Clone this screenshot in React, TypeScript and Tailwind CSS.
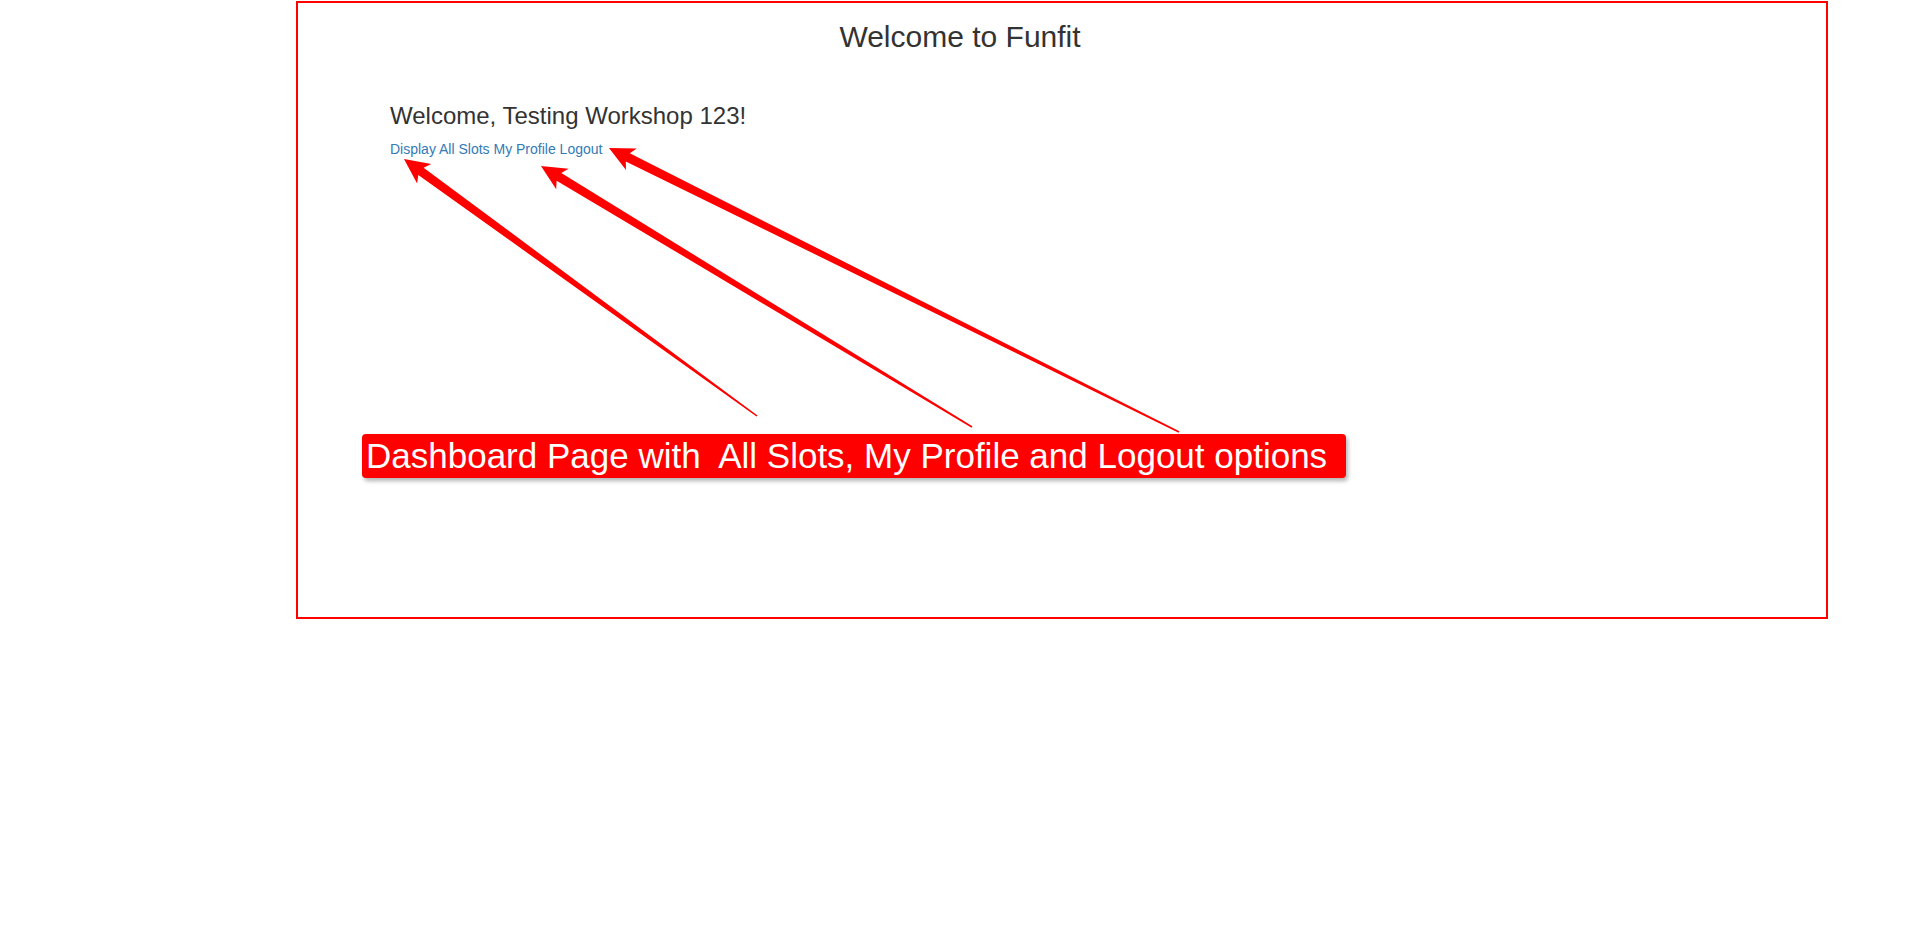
type Pt = [number, number];

// tapered annotation arrow: thin at the tail, thick shaft, triangle head
const arrowPoints = (tail: Pt, tip: Pt) => {
  const dx = tip[0] - tail[0];
  const dy = tip[1] - tail[1];
  const len = Math.hypot(dx, dy);
  const ux = dx / len;
  const uy = dy / len;
  const nx = -uy;
  const ny = ux;
  const headLen = 25;
  const headHalf = 12;
  const shaftHalf = 4.5;
  const tailHalf = 0.8;
  const bx = tip[0] - ux * headLen;
  const by = tip[1] - uy * headLen;
  const pts: Pt[] = [
    [tail[0] + nx * tailHalf, tail[1] + ny * tailHalf],
    [bx + ux * 4 + nx * shaftHalf, by + uy * 4 + ny * shaftHalf],
    [bx + nx * headHalf, by + ny * headHalf],
    tip,
    [bx - nx * headHalf, by - ny * headHalf],
    [bx + ux * 4 - nx * shaftHalf, by + uy * 4 - ny * shaftHalf],
    [tail[0] - nx * tailHalf, tail[1] - ny * tailHalf],
  ];
  return pts.map((p) => `${p[0].toFixed(1)},${p[1].toFixed(1)}`).join(" ");
};

const arrows: { tail: Pt; tip: Pt }[] = [
  { tail: [757, 416], tip: [404, 159] },
  { tail: [972, 427], tip: [541, 166] },
  { tail: [1179, 432], tip: [609, 148] },
];

const App = () => {
  return (
    <div className="relative flow-root min-h-[945px] w-full bg-white font-['Liberation_Sans',Arial,sans-serif] text-[#333]">
      {/* Page header */}
      <h2 className="mt-[20px] mb-[10px] text-center text-[30px] leading-[1.1] font-normal">
        Welcome to Funfit
      </h2>

      {/* Dashboard */}
      <div className="mx-auto w-[1170px] px-[15px] pt-[40px]">
        <h3 className="mb-[10px] text-[24px] leading-[1.1] font-normal">
          Welcome, Testing Workshop 123!
        </h3>
        <div className="text-[14px] leading-[20px] text-[#337ab7]">
          <a href="#" className="hover:underline">Display All Slots</a>{" "}
          <a href="#" className="hover:underline">My Profile</a>{" "}
          <a href="#" className="hover:underline">Logout</a>
        </div>
      </div>

      {/* Annotation frame */}
      <div className="pointer-events-none absolute top-[1px] left-[296px] h-[618px] w-[1532px] border-2 border-[#ff0000]" />

      {/* Annotation arrows */}
      <svg
        className="pointer-events-none absolute top-0 left-0"
        width="1920"
        height="945"
        viewBox="0 0 1920 945"
      >
        {arrows.map((a, i) => (
          <polygon key={i} points={arrowPoints(a.tail, a.tip)} fill="#ff0000" />
        ))}
      </svg>

      {/* Annotation label */}
      <div className="absolute top-[434px] left-[362px] h-[44px] w-[984px] rounded-[4px] bg-[#ff0000] pl-[4px] text-[35px] leading-[44px] whitespace-pre text-white shadow-[2px_3px_4px_rgba(0,0,0,0.3)]">
        Dashboard Page with  All Slots, My Profile and Logout options
      </div>
    </div>
  );
};

export default App;
